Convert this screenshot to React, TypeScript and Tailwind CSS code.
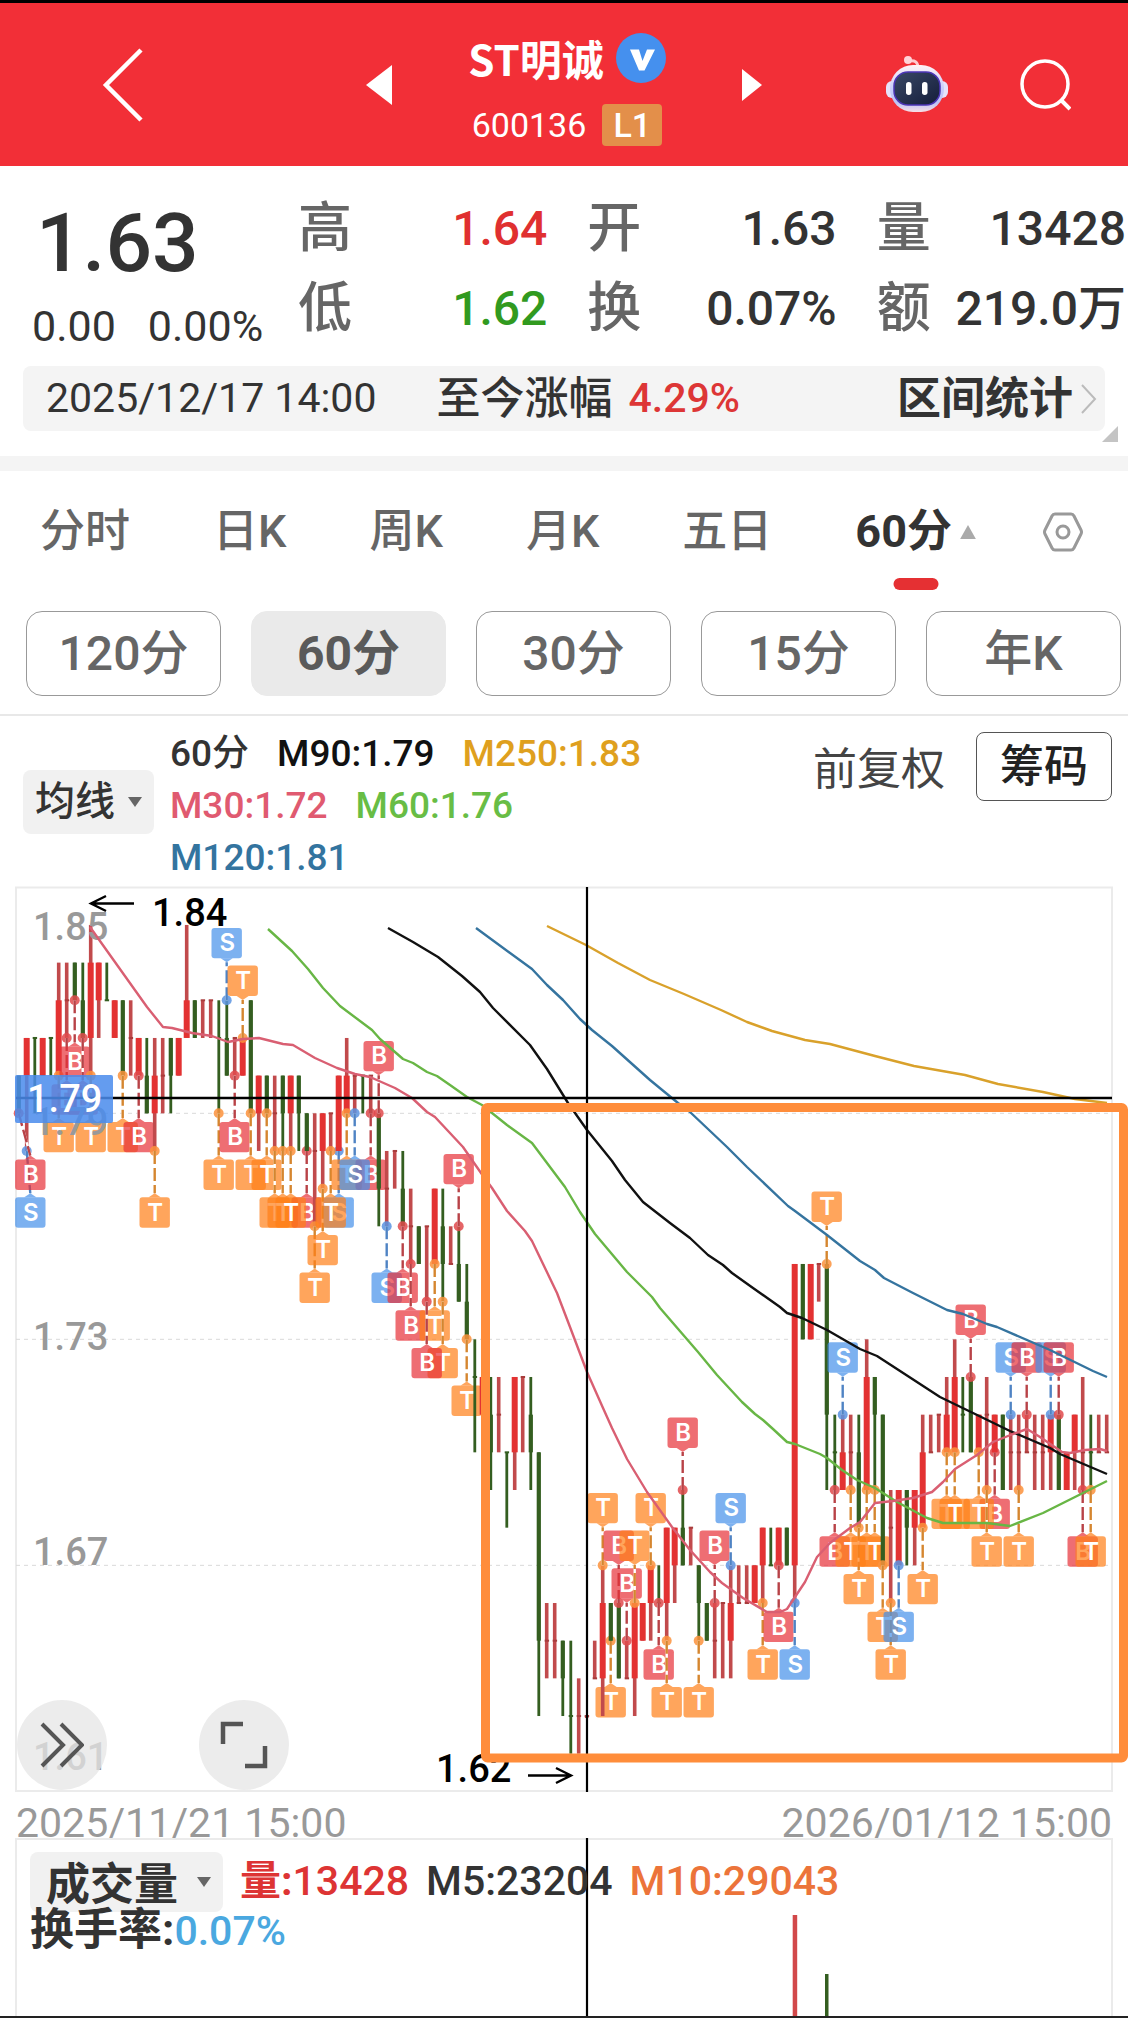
import { useState } from 'react';

type Kind = 'B' | 'S' | 'T';

interface Layer {
  order: number;
  node: React.ReactNode;
}

const RED = '#e33232';
const RED_WICK = '#c14a4c';
const GREEN = '#345e20';

const TABS = ['分时', '日K', '周K', '月K', '五日', '60分'];
const PERIODS = ['120分', '60分', '30分', '15分', '年K'];

const QUOTES = [
  { label: '高', value: '1.64', color: 'text-[#e03030]' },
  { label: '开', value: '1.63', color: 'text-[#333333]' },
  { label: '量', value: '13428', color: 'text-[#333333]' },
  { label: '低', value: '1.62', color: 'text-[#319a1f]' },
  { label: '换', value: '0.07%', color: 'text-[#333333]' },
  { label: '额', value: '219.0万', color: 'text-[#333333]' },
];

const AVERAGES = [
  { text: '60分', color: 'text-[#333333]' },
  { text: 'M90:1.79', color: 'text-[#111111]' },
  { text: 'M250:1.83', color: 'text-[#dfa01e]' },
  { text: 'M30:1.72', color: 'text-[#e05a70]' },
  { text: 'M60:1.76', color: 'text-[#68bd45]' },
  { text: 'M120:1.81', color: 'text-[#33749f]' },
];

// direction, high, body top, body bottom, low (prices in cents; equal body values = no body)
const CANDLES: [string, number, number, number, number][] = [
  ['g', 180, 180, 179, 179], ['r', 181, 181, 180, 178], ['g', 181, 181, 181, 179], ['r', 181, 181, 180, 180],
  ['g', 181, 181, 181, 180], ['r', 183, 182, 180, 180], ['r', 183, 182, 182, 181], ['g', 183, 183, 182, 182],
  ['g', 183, 182, 181, 181], ['r', 184, 183, 181, 180], ['r', 183, 183, 182, 181], ['g', 183, 182, 182, 182],
  ['r', 182, 182, 181, 181], ['g', 182, 182, 180, 180], ['r', 182, 181, 181, 180], ['r', 181, 181, 180, 180],
  ['g', 181, 180, 179, 179], ['r', 181, 180, 179, 178], ['r', 181, 180, 180, 179], ['g', 181, 181, 180, 179],
  ['r', 181, 181, 180, 180], ['r', 184, 182, 181, 181], ['g', 182, 182, 181, 181], ['r', 182, 182, 182, 181],
  ['r', 182, 182, 182, 181], ['g', 182, 181, 181, 179], ['g', 182, 181, 180, 180], ['r', 181, 181, 181, 180],
  ['r', 181, 181, 180, 180], ['g', 182, 182, 179, 179], ['r', 180, 180, 179, 178], ['g', 180, 180, 179, 179],
  ['r', 180, 179, 179, 178], ['g', 180, 180, 179, 178], ['r', 180, 180, 179, 178], ['g', 180, 180, 179, 178],
  ['g', 179, 179, 178, 178], ['r', 179, 178, 178, 176], ['r', 179, 179, 178, 177], ['r', 179, 179, 179, 178],
  ['r', 180, 180, 178, 178], ['r', 181, 180, 179, 179], ['r', 180, 180, 180, 179], ['g', 180, 180, 180, 179],
  ['r', 180, 180, 180, 179], ['g', 179, 179, 177, 176], ['r', 178, 177, 177, 176], ['r', 178, 178, 178, 177],
  ['g', 178, 177, 176, 176], ['r', 177, 176, 176, 175], ['g', 176, 176, 175, 175], ['r', 176, 176, 176, 174],
  ['r', 177, 177, 175, 175], ['g', 177, 176, 175, 174], ['r', 176, 175, 175, 175], ['g', 176, 175, 174, 174],
  ['g', 175, 174, 173, 173], ['g', 173, 172, 172, 170], ['r', 172, 172, 171, 171], ['g', 172, 171, 170, 169],
  ['r', 172, 171, 171, 170], ['g', 170, 170, 170, 168], ['r', 172, 172, 170, 169], ['r', 172, 172, 172, 170],
  ['g', 172, 171, 170, 169], ['g', 170, 170, 165, 163], ['r', 166, 165, 165, 164], ['r', 166, 165, 165, 164],
  ['g', 165, 165, 164, 163], ['g', 165, 163, 163, 162], ['r', 164, 163, 163, 162], ['r', 163, 163, 163, 163],
  ['r', 165, 164, 164, 164], ['r', 167, 166, 164, 163], ['g', 166, 166, 165, 165], ['g', 166, 166, 164, 164],
  ['r', 165, 164, 164, 164], ['r', 166, 166, 164, 163], ['r', 166, 166, 165, 165], ['r', 167, 167, 166, 165],
  ['g', 167, 166, 166, 166], ['r', 168, 168, 166, 165], ['r', 168, 168, 167, 166], ['g', 169, 168, 167, 167],
  ['r', 168, 168, 168, 167], ['g', 167, 167, 166, 165], ['g', 166, 166, 165, 165], ['r', 166, 165, 165, 164],
  ['r', 166, 166, 166, 164], ['r', 167, 166, 165, 164], ['r', 167, 166, 166, 166], ['r', 167, 166, 166, 166],
  ['r', 167, 167, 166, 166], ['r', 168, 168, 167, 166], ['g', 168, 167, 167, 167], ['r', 168, 168, 167, 167],
  ['g', 168, 168, 167, 167], ['r', 175, 175, 167, 166], ['g', 175, 175, 173, 173], ['r', 175, 175, 173, 173],
  ['r', 175, 175, 175, 174], ['g', 175, 175, 171, 169], ['g', 171, 170, 170, 169], ['r', 171, 170, 169, 169],
  ['r', 171, 170, 170, 169], ['g', 171, 170, 168, 168], ['r', 173, 172, 169, 169], ['g', 172, 172, 171, 169],
  ['g', 171, 171, 167, 167], ['r', 169, 168, 168, 166], ['r', 169, 169, 167, 167], ['g', 169, 169, 168, 167],
  ['r', 169, 169, 168, 167], ['r', 171, 170, 168, 168], ['r', 171, 170, 170, 170], ['r', 171, 171, 171, 170],
  ['r', 172, 171, 170, 170], ['r', 173, 172, 170, 170], ['g', 172, 171, 171, 170], ['g', 172, 172, 170, 170],
  ['r', 171, 171, 170, 170], ['r', 172, 171, 171, 169], ['r', 171, 171, 170, 170], ['g', 171, 171, 169, 169],
  ['r', 171, 170, 170, 169], ['r', 171, 170, 170, 169], ['r', 171, 170, 170, 170], ['r', 171, 170, 170, 169],
  ['r', 171, 170, 170, 169], ['r', 171, 171, 170, 169], ['g', 171, 171, 169, 169], ['r', 170, 170, 169, 169],
  ['r', 171, 171, 170, 169], ['r', 172, 170, 170, 169], ['g', 171, 170, 170, 169], ['r', 171, 170, 170, 170],
  ['r', 171, 170, 170, 170],
];

// bar index, kind, anchor price, side (1 below, -1 above), optional paint order
const MARKS: [number, Kind, number, 1 | -1, number?][] = [
  [0, 'B', 179, 1, 1.2], [1, 'S', 178, 1], [5, 'T', 180, 1], [6, 'B', 181, 1], [7, 'B', 182, 1], [8, 'B', 181, 1],
  [9, 'T', 180, 1], [13, 'T', 180, 1], [15, 'B', 180, 1], [17, 'T', 178, 1], [25, 'T', 179, 1], [26, 'S', 182, -1],
  [27, 'B', 180, 1], [28, 'T', 181, -1], [29, 'T', 179, 1], [31, 'T', 179, 1], [32, 'T', 178, 1], [33, 'T', 178, 1],
  [34, 'T', 178, 1], [36, 'B', 178, 1, 33], [37, 'T', 176, 1], [38, 'T', 177, 1], [39, 'T', 178, 1],
  [40, 'S', 178, 1, 38], [41, 'T', 179, 1], [42, 'S', 179, 1], [44, 'B', 179, 1, 41], [45, 'B', 179, -1],
  [46, 'S', 176, 1], [48, 'B', 176, 1], [49, 'B', 175, 1], [51, 'B', 174, 1, 54], [52, 'T', 175, 1], [53, 'T', 174, 1],
  [55, 'B', 176, -1], [56, 'T', 173, 1], [73, 'T', 167, -1], [74, 'T', 165, 1, 72], [75, 'B', 166, -1],
  [76, 'B', 165, -1], [77, 'T', 166, -1], [79, 'T', 167, -1], [80, 'B', 166, 1], [81, 'T', 165, 1],
  [83, 'B', 169, -1], [85, 'T', 165, 1], [87, 'B', 166, -1], [89, 'S', 167, -1], [93, 'T', 166, 1],
  [95, 'B', 167, 1], [97, 'S', 166, 1], [101, 'T', 175, -1], [102, 'B', 169, 1], [103, 'S', 171, -1],
  [104, 'T', 169, 1], [105, 'T', 168, 1], [106, 'T', 169, 1], [107, 'T', 169, 1], [108, 'T', 167, 1],
  [109, 'T', 166, 1], [110, 'S', 167, 1], [113, 'T', 168, 1], [116, 'T', 170, 1], [117, 'T', 170, 1],
  [119, 'B', 172, -1], [120, 'T', 170, 1], [121, 'T', 169, 1], [122, 'B', 170, 1, 119], [124, 'S', 171, -1],
  [125, 'T', 169, 1], [126, 'B', 171, -1], [129, 'S', 171, -1], [130, 'B', 171, -1], [133, 'B', 169, 1],
  [134, 'T', 169, 1],
];

const MARK_FILL: Record<Kind, string> = { B: '#e73038', S: '#4590ea', T: '#ff7f17' };
const MARK_LINE: Record<Kind, string> = { B: '#b84247', S: '#4f83c4', T: '#d5862f' };
const MARK_DOT: Record<Kind, string> = { B: '#e04a4c', S: '#5a93e0', T: '#fb923c' };

const MA_LINES = [
  {
    color: '#d9a12b',
    points: '547,926 586,945 618,963 650,980 684,994 721,1010 747,1022 772,1031 805,1040 830,1044 875,1056 914,1066 965,1075 998,1084 1043,1092 1075,1099 1107,1103',
  },
  {
    color: '#35749f',
    points: '476,928 532,969 547,985 563,1000 580,1019 592,1030 612,1046 650,1080 678,1103 690,1112 727,1147 747,1167 788,1206 795,1211 827,1235 860,1261 875,1270 884,1278 913,1293 947,1310 963,1314 987,1324 997,1327 1050,1350 1093,1371 1107,1377',
  },
  {
    color: '#111111',
    points: '388,928 413,942 438,957 462,976 480,992 493,1008 530,1045 547,1069 568,1103 587,1130 612,1161 625,1180 643,1202 670,1223 690,1238 708,1255 723,1265 732,1273 753,1288 780,1307 787,1313 802,1318 827,1330 860,1349 877,1356 897,1369 940,1397 973,1413 1010,1431 1050,1448 1060,1454 1107,1474',
  },
  {
    color: '#68b645',
    points: '268,929 292,951 308,969 323,988 340,1006 372,1030 380,1039 403,1059 413,1063 427,1072 437,1076 450,1085 467,1097 482,1105 507,1125 532,1143 565,1187 580,1212 595,1234 627,1272 652,1297 660,1308 698,1352 717,1375 742,1402 755,1414 763,1420 773,1429 787,1442 795,1444 820,1454 827,1458 842,1470 857,1480 875,1488 897,1502 927,1518 943,1523 987,1523 1010,1526 1043,1513 1083,1493 1107,1481',
  },
  {
    color: '#d95f72',
    points: '90,927 147,1007 163,1027 172,1028 192,1033 212,1036 228,1042 243,1039 259,1038 283,1044 293,1045 315,1058 337,1068 355,1074 370,1077 395,1088 412,1098 427,1112 435,1117 463,1147 481,1173 492,1188 507,1211 525,1231 532,1241 557,1293 570,1327 587,1372 603,1408 612,1428 627,1459 647,1492 672,1527 690,1550 710,1572 722,1583 743,1598 767,1612 780,1612 787,1609 795,1597 805,1582 817,1557 830,1543 850,1528 860,1522 875,1503 893,1501 913,1498 932,1492 943,1482 955,1469 977,1455 993,1442 1013,1434 1027,1429 1040,1437 1062,1452 1070,1453 1085,1450 1100,1449 1107,1451',
  },
];

const AXIS = [
  { text: '1.85', y: 940 },
  { text: '1.79', y: 1135 },
  { text: '1.73', y: 1350 },
  { text: '1.67', y: 1565 },
  { text: '1.61', y: 1770 },
];

const barX = (i: number) => 18.7 + i * 8;
const priceY = (cents: number) => 1113.3 + (179 - cents) * 37.67;

function Candle({ index }: { index: number }) {
  const [dir, high, top, bottom, low] = CANDLES[index];
  const x = barX(index);
  const up = dir === 'r';
  const wick = Math.max(priceY(low) - priceY(high), 2);
  return (
    <g>
      <rect x={x - (up ? 1.8 : 1.3)} y={priceY(high)} width={up ? 3.6 : 2.8} height={wick} fill={up ? RED_WICK : GREEN} />
      {top > bottom && (
        <rect x={x - (up ? 3 : 2)} y={priceY(top)} width={up ? 6 : 4.2} height={priceY(bottom) - priceY(top)} fill={up ? RED : GREEN} />
      )}
      {top === bottom && <rect x={x - 2} y={priceY(top) - 1} width={4.4} height={2} fill={up ? '#a83c3c' : GREEN} />}
    </g>
  );
}

function Mark({ index, kind, price, side }: { index: number; kind: Kind; price: number; side: 1 | -1 }) {
  const x = barX(index);
  const y = priceY(price);
  const cx = Math.max(x, 30.3);
  const edge = side === 1 ? y + 46.3 : y - 42;
  const boxY = side === 1 ? edge : edge - 30.4;
  return (
    <g>
      <circle cx={x} cy={y} r={5} fill={MARK_DOT[kind]} opacity={0.85} />
      <line x1={x} y1={y} x2={cx} y2={edge - side * 4} stroke="#ffffff" strokeWidth={2.4} />
      <line x1={x} y1={y} x2={cx} y2={edge - side * 4} stroke={MARK_LINE[kind]} strokeWidth={2.4} strokeDasharray="13 4" />
      <path d={`M${cx - 6} ${edge}L${cx} ${edge - side * 4}L${cx + 6} ${edge}Z`} fill={MARK_FILL[kind]} opacity={0.7} />
      <rect x={cx - 15.2} y={boxY} width={30.4} height={30.4} rx={3} fill={MARK_FILL[kind]} opacity={0.7} />
      <text x={cx + 0.5} y={boxY + 23.5} textAnchor="middle" fill="#ffffff" className="font-[Inter,sans-serif] text-[24px] font-semibold">
        {kind}
      </text>
    </g>
  );
}

function KlineChart() {
  const layers: Layer[] = [
    ...CANDLES.map((_, i) => ({ order: i, node: <Candle key={`c${i}`} index={i} /> })),
    ...MARKS.map(([i, kind, price, side, order]) => ({
      order: (order ?? i) + 0.5,
      node: <Mark key={`m${i}`} index={i} kind={kind} price={price} side={side} />,
    })),
  ].sort((a, b) => a.order - b.order);

  return (
    <svg viewBox="0 884 1128 912" className="block w-full" role="img" aria-label="60分K线">
      <path d="M16 887.5H1112V1791H16Z" fill="none" stroke="#ebebeb" strokeWidth={2} />
      {[179, 173, 167].map((p) => (
        <line key={p} x1={16} x2={1112} y1={priceY(p)} y2={priceY(p)} stroke="#d9d9d9" strokeWidth={1} strokeDasharray="4 4" />
      ))}
      {layers.map((l) => l.node)}
      {AXIS.map((a) => (
        <text key={a.text} x={33} y={a.y} fill="#999999" className="text-[38px] font-medium">{a.text}</text>
      ))}
      {MA_LINES.map((m) => (
        <polyline key={m.color} points={m.points} fill="none" stroke={m.color} strokeWidth={2.4} strokeLinejoin="round" />
      ))}

      <text x={152} y={926} fill="#000000" className="text-[38px] font-medium">1.84</text>
      <path d="M134 903.5H92M106 896L91 903.5L106 911" fill="none" stroke="#000000" strokeWidth={2.4} />
      <text x={436} y={1782} fill="#000000" className="text-[38px] font-medium">1.62</text>
      <path d="M528 1775.5H570M556 1768L571 1775.5L556 1783" fill="none" stroke="#000000" strokeWidth={2.4} />

      <line x1={16} x2={1112} y1={1098} y2={1098} stroke="#000000" strokeWidth={2.6} />
      <line x1={587} x2={587} y1={887} y2={1792} stroke="#000000" strokeWidth={2.2} />
      <rect x={15} y={1075} width={98} height={48} rx={2} fill="#4a8cec" opacity={0.86} />
      <text x={27} y={1112} fill="#ffffff" className="text-[38px] font-medium">1.79</text>

      <rect x={485.5} y={1107.5} width={638} height={650.5} rx={2} fill="none" stroke="#ff8d3b" strokeWidth={9} />
    </svg>
  );
}

function DropDown({ label, options, className }: { label: string; options: string[]; className: string }) {
  return (
    <div className="relative inline-flex items-center rounded-lg bg-[#f1f1f1] text-[#333333]">
      <select aria-label={label} className={`appearance-none bg-transparent outline-none ${className}`}>
        {options.map((o) => <option key={o}>{o}</option>)}
      </select>
      <svg viewBox="0 0 14 10" className="pointer-events-none absolute right-3 w-[14px]" fill="#666666">
        <path d="M0 0H14L7 10Z" />
      </svg>
    </div>
  );
}

function Robot() {
  return (
    <svg viewBox="0 0 62 58" className="w-[62px]">
      <defs>
        <linearGradient id="shell" x1="0" y1="0" x2="0" y2="1">
          <stop offset="0" stopColor="#fff3f6" />
          <stop offset="0.5" stopColor="#c9cdfb" />
          <stop offset="0.8" stopColor="#bcc3f5" />
          <stop offset="1" stopColor="#f7dfe6" />
        </linearGradient>
        <linearGradient id="face" x1="0" y1="0" x2="1" y2="1">
          <stop offset="0" stopColor="#3a4866" />
          <stop offset="1" stopColor="#141d3a" />
        </linearGradient>
      </defs>
      <path d="M23 5C29 4 32 6 32 12" fill="none" stroke="#ffc9cf" strokeWidth="3" />
      <circle cx="22" cy="4" r="4" fill="#ffd3d8" />
      <rect x="0" y="25" width="12" height="17" rx="6" fill="#e6e3fb" />
      <rect x="50" y="25" width="12" height="17" rx="6" fill="#e6e3fb" />
      <rect x="4" y="9" width="54" height="47" rx="23" fill="url(#shell)" />
      <rect x="8" y="16" width="46" height="33" rx="14" fill="url(#face)" stroke="#4b35b5" strokeWidth="1.5" />
      <rect x="20" y="26" width="5.5" height="13" rx="2.7" fill="#ffffff" />
      <rect x="36" y="26" width="5.5" height="13" rx="2.7" fill="#ffffff" />
    </svg>
  );
}

export default function App() {
  const [tab, setTab] = useState('60分');
  const [period, setPeriod] = useState('60分');

  return (
    <div className="overflow-x-hidden bg-white font-[Roboto,'Noto_Sans_CJK_SC',sans-serif] font-medium text-[#333333]">
      <header className="grid h-[166px] grid-cols-[1fr_auto_1fr] items-center border-t-[3px] border-black bg-[#f22f37] text-white">
        <div className="pl-[102px]">
          <button aria-label="返回" className="block">
            <svg viewBox="0 0 42 74" className="w-[42px]" fill="none" stroke="#ffffff" strokeWidth="4.5">
              <path d="M39 2L4 37L39 72" />
            </svg>
          </button>
        </div>
        <div className="flex w-[396px] items-center justify-between">
          <button aria-label="上一只">
            <svg viewBox="0 0 26 40" className="w-[26px]" fill="#ffffff"><path d="M26 0V40L0 20Z" /></svg>
          </button>
          <div className="mt-2 flex flex-col items-center gap-5">
            <div className="flex items-center gap-3">
              <h1 className="font-['Noto_Sans_CJK_SC',sans-serif] text-[42px] leading-[52px] font-bold">ST明诚</h1>
              <svg viewBox="0 0 50 50" className="w-[50px]">
                <circle cx="25" cy="25" r="25" fill="#4590ee" />
                <path d="M14 16.5H23L26.5 28L31 16.5H39L28.5 37.5H23Z" fill="#ffffff" />
              </svg>
            </div>
            <div className="flex items-center gap-4">
              <span className="text-[34px] leading-[42px] font-normal">600136</span>
              <span className="w-[60px] rounded bg-[#e38f4a] text-center text-[34px] leading-[42px]">L1</span>
            </div>
          </div>
          <button aria-label="下一只">
            <svg viewBox="0 0 20 32" className="w-5" fill="#ffffff"><path d="M0 0V32L20 16Z" /></svg>
          </button>
        </div>
        <div className="flex items-center justify-end gap-[72px] pr-[57px]">
          <button aria-label="助手"><Robot /></button>
          <button aria-label="搜索">
            <svg viewBox="0 0 51 52" className="w-[51px]" fill="none" stroke="#ffffff" strokeWidth="3.5">
              <circle cx="25" cy="25" r="23" />
              <path d="M41 41L50 50" strokeWidth="4" />
            </svg>
          </button>
        </div>
      </header>

      <section className="relative pb-[25px]">
        <div className="flex h-[194px] pt-[23px] pr-[2px]">
          <div className="w-[298px] shrink-0 pt-1 pl-8">
            <div className="pl-1 text-[82px] leading-[100px]">1.63</div>
            <div className="flex gap-8 text-[43px] leading-[66px] font-normal">
              <span>0.00</span>
              <span>0.00%</span>
            </div>
          </div>
          <dl className="grid flex-1 grid-cols-3 content-start gap-x-10">
            {QUOTES.map((q) => (
              <div key={q.label} className="flex h-20 items-center justify-between whitespace-nowrap">
                <dt className="text-[54px] leading-[80px] text-[#666666]">{q.label}</dt>
                <dd className={`text-[48px] leading-[80px] ${q.color}`}>{q.value}</dd>
              </div>
            ))}
          </dl>
        </div>
        <div className="mx-[23px] mt-1.5 flex h-[65px] items-center rounded-lg bg-[#f4f4f4] pr-2 pl-[23px] text-[41px]">
          <span className="font-normal">2025/12/17 14:00</span>
          <span className="ml-[60px] text-[44px]">至今涨幅</span>
          <span className="ml-4 text-[#dd3636]">4.29%</span>
          <a href="#stats" className="ml-auto flex items-center gap-2 text-[44px] font-bold">
            区间统计
            <svg viewBox="0 0 16 30" className="w-4" fill="none" stroke="#bbbbbb" strokeWidth="2"><path d="M1 1L14 15L1 29" /></svg>
          </a>
        </div>
        <svg viewBox="0 0 16 16" className="absolute right-[10px] bottom-[14px] w-4" fill="#c4c4c4"><path d="M16 0V16H0Z" /></svg>
      </section>

      <div className="h-[15px] bg-[#f4f4f4]" />

      <nav className="flex items-center justify-between pt-[31px] pr-[45px] pb-[49px] pl-10">
        {TABS.map((t) => (
          <button
            key={t}
            onClick={() => setTab(t)}
            className={`relative flex items-center gap-2 text-[45px] leading-[60px] ${tab === t ? 'font-bold text-[#333333]' : 'text-[#666666]'}`}
          >
            {t}
            {t === '60分' && <svg viewBox="0 0 18 16" className="w-4" fill="#aaaaaa"><path d="M9 0L18 16H0Z" /></svg>}
            {tab === t && <span className="absolute -bottom-7 left-1/2 h-3 w-[45px] -translate-x-1/2 rounded-full bg-[#e53033]" />}
          </button>
        ))}
        <button aria-label="设置" className="-ml-4">
          <svg viewBox="0 0 40 40" className="w-10" fill="none" stroke="#999999" strokeWidth="3">
            <path d="M12 2H28Q30 2 31 4L38 18Q39 20 38 22L31 36Q30 38 28 38H12Q10 38 9 36L2 22Q1 20 2 18L9 4Q10 2 12 2Z" />
            <circle cx="20" cy="20" r="6" />
          </svg>
        </button>
      </nav>

      <div className="grid grid-cols-5 gap-[30px] border-b-2 border-[#e8e8e8] pr-[7px] pb-[18px] pl-[26px]">
        {PERIODS.map((p) => (
          <button
            key={p}
            onClick={() => setPeriod(p)}
            className={`h-[85px] rounded-2xl border text-[48px] ${period === p ? 'border-[#eaeaea] bg-[#eaeaea] font-bold text-[#5a5a5a]' : 'border-[#999999] text-[#666666]'}`}
          >
            {p}
          </button>
        ))}
      </div>

      <section className="flex items-center gap-4 pt-3 pr-4 pl-[23px]">
        <div className="pb-2">
          <DropDown label="指标" options={['均线', 'BOLL']} className="h-16 w-[131px] pl-3 text-[40px]" />
        </div>
        <div className="flex max-w-[490px] flex-1 flex-wrap gap-x-7 text-[37px] leading-[52px]">
          {AVERAGES.map((a) => <span key={a.text} className={a.color}>{a.text}</span>)}
        </div>
        <div className="ml-auto flex items-center gap-[31px] self-start pt-1 text-[44px]">
          <button className="pt-2 leading-[61px] font-normal text-[#444444]">前复权</button>
          <button className="h-[69px] w-[136px] rounded-lg border border-[#555555] leading-[64px] text-[#222222]">筹码</button>
        </div>
      </section>

      <section className="relative">
        <KlineChart />
        <div className="absolute bottom-[6px] left-[17px] flex gap-[92px]">
          <button aria-label="展开" className="flex h-[90px] w-[90px] items-center justify-center rounded-full bg-[#e6e6e6]/75">
            <svg viewBox="0 0 44 46" className="w-11" fill="none" stroke="#555555" strokeWidth="4">
              <path d="M2 2L23 23L2 44M21 2L42 23L21 44" />
            </svg>
          </button>
          <button aria-label="全屏" className="flex h-[90px] w-[90px] items-center justify-center rounded-full bg-[#e6e6e6]/75">
            <svg viewBox="0 0 48 48" className="w-12" fill="none" stroke="#555555" strokeWidth="4.5">
              <path d="M3 23V3H23M45 25V45H25" />
            </svg>
          </button>
        </div>
      </section>

      <div className="flex justify-between px-4 text-[41px] leading-[54px] font-normal text-[#999999]">
        <time>2025/11/21 15:00</time>
        <time>2026/01/12 15:00</time>
      </div>

      <section className="-mt-3 grid border-b-2 border-[#222222]">
        <svg viewBox="0 1838 1128 178" className="col-start-1 row-start-1 block w-full" role="img" aria-label="成交量图">
          <path d="M16 2016V1839H1112V2016" fill="none" stroke="#ebebeb" strokeWidth={2} />
          <rect x={792.7} y={1915} width={4.5} height={101} fill="#d2484a" />
          <rect x={825} y={1974} width={3.5} height={42} fill={GREEN} />
          <line x1={587} x2={587} y1={1838} y2={2016} stroke="#000000" strokeWidth={2.2} />
        </svg>
        <div className="col-start-1 row-start-1 pt-[14px] pl-[30px]">
          <div className="flex h-[60px] items-center gap-[17px] text-[41px]">
            <DropDown label="副图" options={['成交量', 'MACD']} className="h-[60px] w-[193px] pl-4 text-[44px] font-bold" />
            <span className="text-[#dd3434]"><b className="font-bold">量:</b>13428</span>
            <span>M5:23204</span>
            <span className="text-[#ec743a]">M10:29043</span>
          </div>
          <div className="relative text-[44px] leading-[36px] font-bold">
            换手率:<span className="text-[41px] font-medium text-[#4aa8e0]">0.07%</span>
          </div>
        </div>
      </section>
    </div>
  );
}
